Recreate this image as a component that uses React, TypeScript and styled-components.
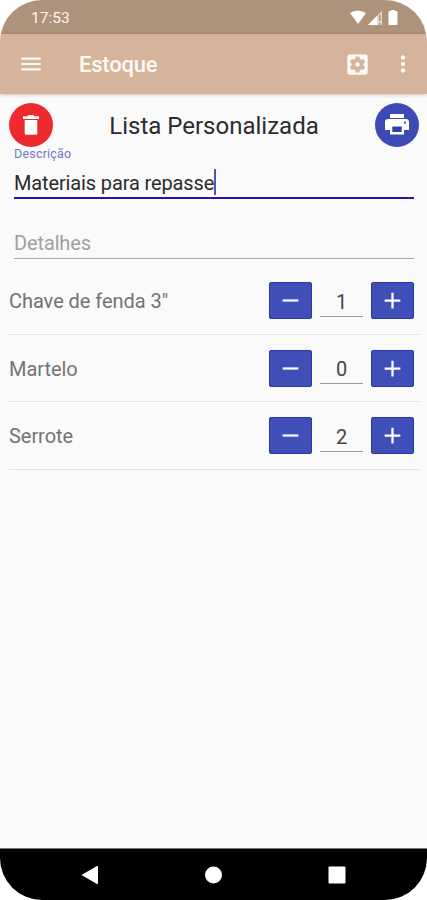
import React from 'react';
import styled, { createGlobalStyle } from 'styled-components';
import {
  MdAdd,
  MdMenu,
  MdMoreVert,
  MdRemove,
  MdSettingsApplications,
} from 'react-icons/md';

const GlobalStyle = createGlobalStyle`
  * { box-sizing: border-box; }
  body {
    margin: 0;
    background: #fff;
    font-family: Roboto, "Liberation Sans", sans-serif;
  }
  svg { display: block; flex: none; }
`;

const Screen = styled.div`
  display: flex;
  flex-direction: column;
  width: 427px;
  height: 900px;
  overflow: hidden;
  border-radius: 42px;
  background: #fafafa;
`;

const StatusBar = styled.div`
  display: flex;
  align-items: center;
  justify-content: space-between;
  height: 34px;
  padding: 2px 28px 0 31px;
  background: #ae937c;
  color: #fff5ef;
`;

const Clock = styled.span`
  font-size: 15.5px;
  line-height: 18px;
`;

const AppBar = styled.header`
  display: flex;
  align-items: center;
  height: 60px;
  padding: 0 11px 0 18px;
  background: #d5b49b;
  box-shadow: 0 1px 4px rgba(0, 0, 0, 0.22);
  color: #fffaf7;
`;

const AppTitle = styled.h1`
  flex: 1;
  margin: 2px 0 0 35px;
  font-size: 22px;
  font-weight: 500;
  line-height: 26px;
  letter-spacing: -0.2px;
`;

const BarActions = styled.div`
  display: flex;
  align-items: center;
  gap: 19px;
`;

const Main = styled.main`
  flex: 1;
  padding: 8.5px 8px 0 9px;
`;

const ListHeader = styled.div`
  display: flex;
  align-items: center;
  justify-content: space-between;
  height: 44px;
`;

const RoundButton = styled.button<{ $color: string }>`
  display: flex;
  align-items: center;
  justify-content: center;
  width: 44px;
  height: 44px;
  padding: 0;
  border: 0;
  border-radius: 50%;
  background: ${({ $color }) => $color};
  color: #fff;
`;

const ListTitle = styled.h2`
  margin: 3px 0 0;
  color: #2c2c2c;
  font-size: 24px;
  font-weight: 400;
  line-height: 28px;
`;

const Field = styled.div<{ $active?: boolean; $height: number }>`
  display: flex;
  flex-direction: column;
  justify-content: flex-end;
  height: ${({ $height }) => $height}px;
  margin: 0 5px;
  border-bottom: ${({ $active }) => ($active ? '2px solid #2118a8' : '1px solid #a6a6a6')};
`;

const FieldLabel = styled.span`
  margin-bottom: 6px;
  color: #7276c6;
  font-size: 12.5px;
  line-height: 14px;
  letter-spacing: 0.2px;
`;

const FieldValue = styled.div<{ $hint?: boolean }>`
  display: flex;
  align-items: center;
  height: 30px;
  color: ${({ $hint }) => ($hint ? '#a0a0a0' : '#2c2c2c')};
  font-size: 20px;
  line-height: 24px;
  letter-spacing: -0.13px;
  white-space: nowrap;
`;

const ValueText = styled.span`
  padding-top: 2px;
`;

const Caret = styled.span`
  width: 2px;
  height: 26px;
  background: #5555ae;
`;

const Items = styled.ul`
  margin: 8px 0 0;
  padding: 0;
  list-style: none;
`;

const Item = styled.li`
  display: flex;
  align-items: center;
  height: 67.5px;
  padding: 1px 5px 0 0;
  border-bottom: 1px solid #e2e2e2;
`;

const ItemName = styled.span`
  flex: 1;
  padding-top: 1px;
  color: #737373;
  font-size: 20px;
  line-height: 24px;
  letter-spacing: -0.05px;
`;

const Stepper = styled.div`
  display: flex;
  align-items: center;
  gap: 8px;
`;

const StepButton = styled.button`
  display: flex;
  align-items: center;
  justify-content: center;
  width: 43px;
  height: 37px;
  padding: 0;
  border: 1px solid #2637b0;
  border-radius: 2px;
  background: #3f4fb7;
  color: #fff;
`;

const Quantity = styled.span`
  width: 43px;
  height: 32px;
  border-bottom: 1px solid #999;
  color: #444;
  font-size: 20px;
  line-height: 34px;
  text-align: center;
`;

const NavBar = styled.nav`
  display: flex;
  align-items: center;
  justify-content: space-between;
  height: 52px;
  padding: 0 81px 0 81px;
  border-top: 1px solid #777;
  background: #000;
`;

const items = [
  { name: 'Chave de fenda 3"', quantity: 1 },
  { name: 'Martelo', quantity: 0 },
  { name: 'Serrote', quantity: 2 },
];

const StatusIcons = () => (
  <svg width="50" height="18" viewBox="0 0 50 18" fill="#fff">
    <path d="M1 4Q9 -1 17 4L9 15Z" />
    <path d="M19 16L33 2V16Z" opacity=".65" />
    <path d="M19 16L28 7V16Z" />
    <path d="M30 6h1.5v6H30zM30 14h1.5v2H30z" fill="#ae937c" />
    <path d="M42 1h4v1h1.5a1 1 0 0 1 1 1v12a1 1 0 0 1-1 1h-7a1 1 0 0 1-1-1V3a1 1 0 0 1 1-1H42z" />
  </svg>
);

const TrashIcon = () => (
  <svg width="16" height="20" viewBox="0 0 16 20" fill="#fff">
    <path d="M0 1.2h4.5L5.5 0h5l1 1.2H16V4H0z" />
    <path d="M1.7 5h12.6v13.2a1.6 1.6 0 0 1-1.6 1.6H3.3a1.6 1.6 0 0 1-1.6-1.6z" />
  </svg>
);

const PrinterIcon = () => (
  <svg width="24" height="21" viewBox="0 0 24 21" fill="#fff">
    <path d="M5 0h14v4H5z" />
    <path d="M3.5 5h17A3.3 3.3 0 0 1 24 8.3V16h-5v4.5H5V16H0V8.3A3.3 3.3 0 0 1 3.5 5z" />
    <path d="M7.3 12.5h9.4v5.5H7.3z" fill="#2d3fae" />
    <circle cx="20" cy="8.7" r="1.1" fill="#3c4ab4" />
  </svg>
);

export default function App() {
  return (
    <>
      <GlobalStyle />
      <Screen>
        <StatusBar>
          <Clock>17:53</Clock>
          <StatusIcons />
        </StatusBar>
        <AppBar>
          <MdMenu size={26} />
          <AppTitle>Estoque</AppTitle>
          <BarActions>
            <MdSettingsApplications size={27} />
            <MdMoreVert size={26} />
          </BarActions>
        </AppBar>
        <Main>
          <ListHeader>
            <RoundButton $color="#ed2a2e" aria-label="Excluir">
              <TrashIcon />
            </RoundButton>
            <ListTitle>Lista Personalizada</ListTitle>
            <RoundButton $color="#3c4ab4" aria-label="Imprimir">
              <PrinterIcon />
            </RoundButton>
          </ListHeader>
          <Field $active $height={52.5}>
            <FieldLabel>Descrição</FieldLabel>
            <FieldValue>
              <ValueText>Materiais para repasse</ValueText>
              <Caret />
            </FieldValue>
          </Field>
          <Field $height={60}>
            <FieldValue $hint>Detalhes</FieldValue>
          </Field>
          <Items>
            {items.map(({ name, quantity }) => (
              <Item key={name}>
                <ItemName>{name}</ItemName>
                <Stepper>
                  <StepButton aria-label="Diminuir">
                    <MdRemove size={27} />
                  </StepButton>
                  <Quantity>{quantity}</Quantity>
                  <StepButton aria-label="Aumentar">
                    <MdAdd size={27} />
                  </StepButton>
                </Stepper>
              </Item>
            ))}
          </Items>
        </Main>
        <NavBar>
          <svg width="17" height="20" viewBox="0 0 17 20" fill="#fff">
            <path d="M0.5 10L16 1Q17 .5 17 2V18Q17 19.5 16 19Z" />
          </svg>
          <svg width="18" height="18" viewBox="0 0 18 18" fill="#fff">
            <circle cx="9.5" cy="9" r="8.5" />
          </svg>
          <svg width="18" height="18" viewBox="0 0 18 18" fill="#fff">
            <rect x=".5" y=".5" width="17" height="17" rx="1" />
          </svg>
        </NavBar>
      </Screen>
    </>
  );
}
